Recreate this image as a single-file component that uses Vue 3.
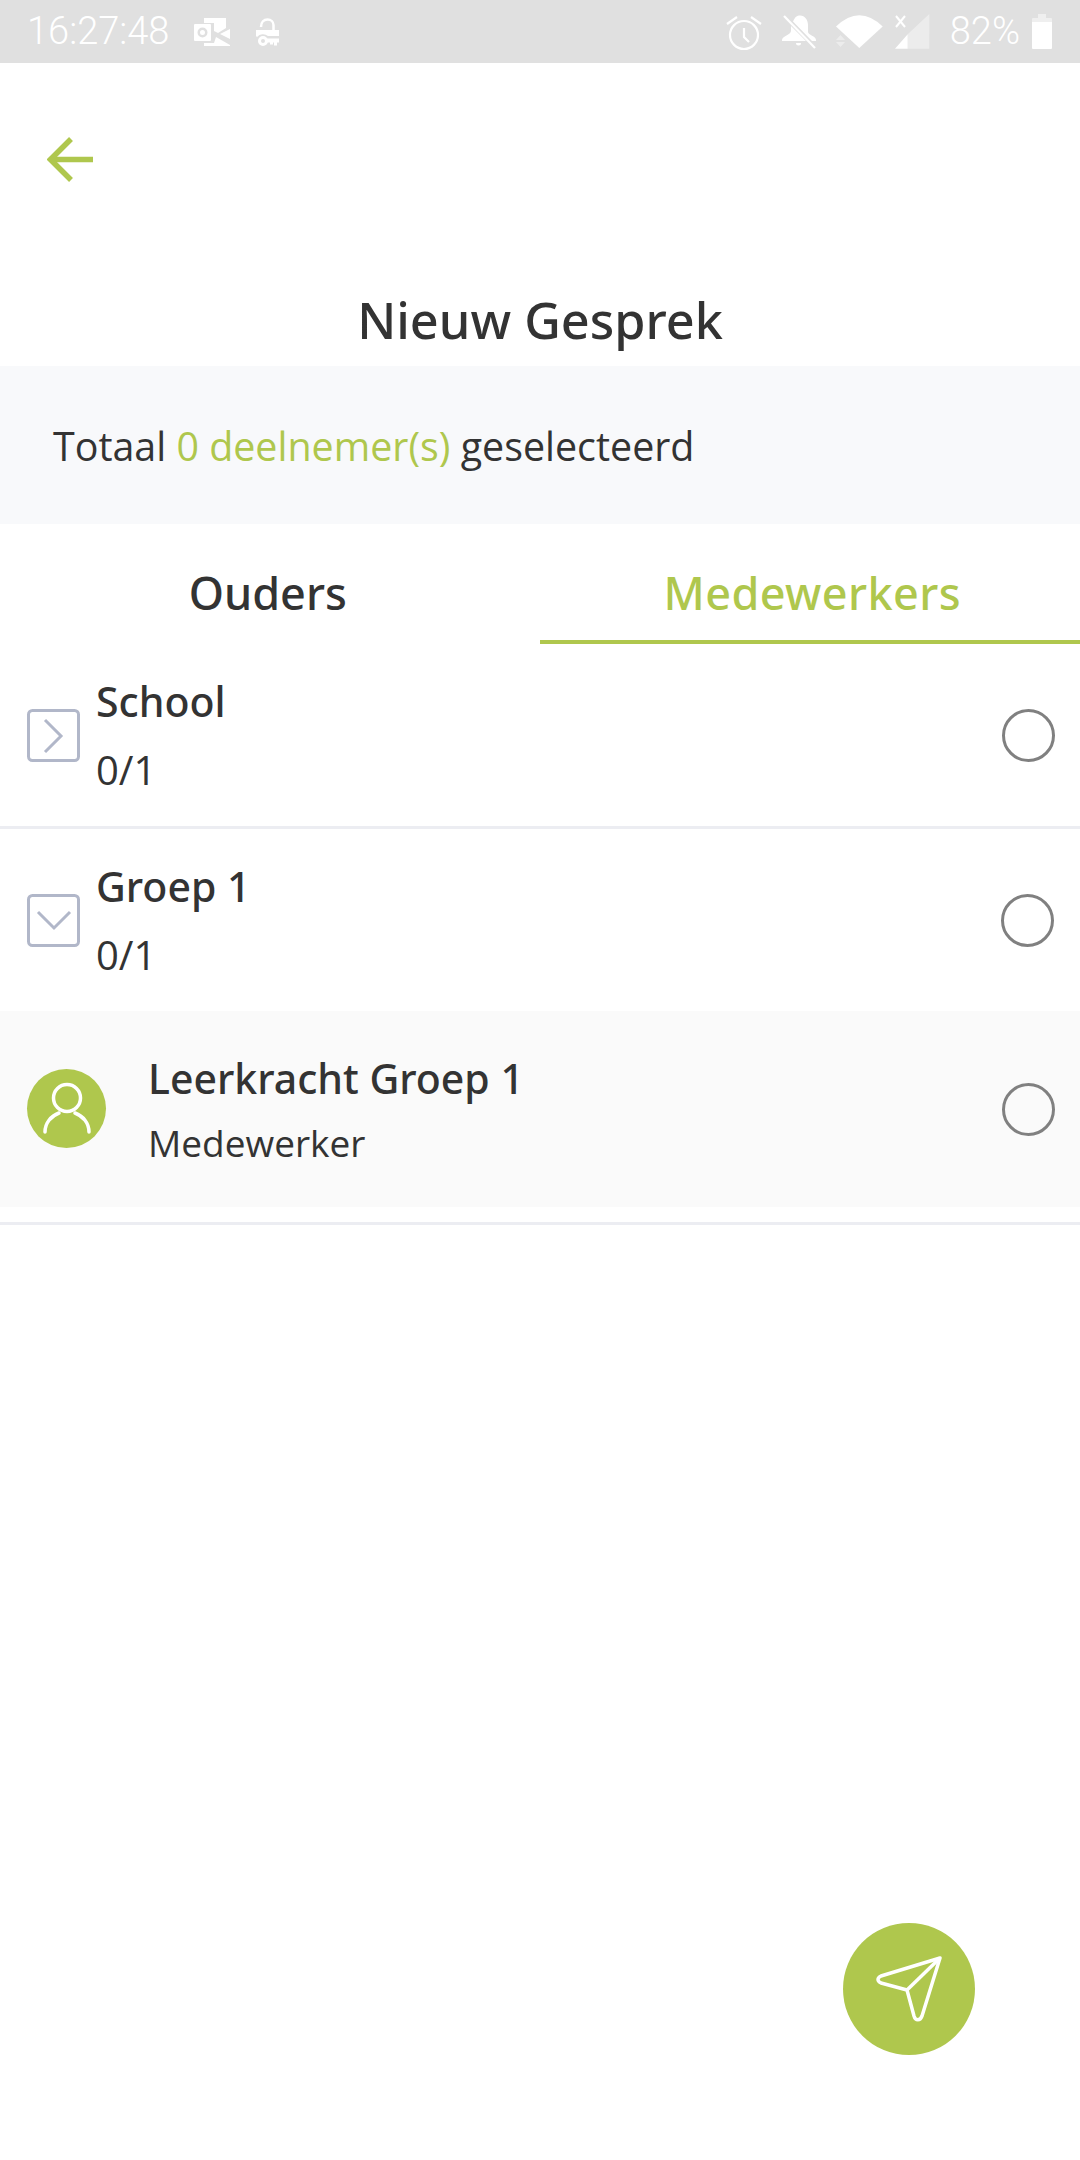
<template>
  <div class="screen">
    <div class="status-bar">
      <div class="status-left">
        <span class="clock">16:27:48</span>
        <svg class="ic-mail" viewBox="0 0 36 28" fill="#fff">
          <path d="M10 0h22v10l-8 5-4-2V5H10z"/>
          <path fill-rule="evenodd" d="M1 6h15a1 1 0 0 1 1 1v15a1 1 0 0 1-1 1H1a1 1 0 0 1-1-1V7a1 1 0 0 1 1-1zM8.500 9.500a5 5 0 1 0 0 10 5 5 0 0 0 0-10zM8.500 12a2.500 2.500 0 1 1 0 5 2.500 2.500 0 0 1 0-5z"/>
          <path d="M36 11v10l-10-5z"/>
          <path d="M10 25h10l2-6 14 8v1H10z"/>
        </svg>
        <svg class="ic-vpn" viewBox="0 0 23 28" fill="#fff">
          <path d="M5 9C5 4 8 1.500 11.500 1.500S17.500 4 17.500 7v5" fill="none" stroke="#fff" stroke-width="2.500"/>
          <path d="M0 12h23v6H12a8 8 0 0 0-11 1l-1-1z"/>
          <circle cx="7" cy="23" r="3.500" fill="none" stroke="#fff" stroke-width="3"/>
          <path d="M11 20.500h12v4h-2v3h-3v-3h-1v2h-3v-2h-3z"/>
        </svg>
      </div>
      <div class="status-right">
        <svg class="ic-alarm" viewBox="0 0 36 36" fill="none" stroke="#fff" stroke-width="2.200">
          <circle cx="18" cy="20" r="14"/>
          <path d="M18 13v9l5 5"/>
          <path d="M1 9L11 2M35 9L25 2"/>
        </svg>
        <svg class="ic-bell" viewBox="0 0 34 34" fill="#fff">
          <path d="M11 6.500C13 2 15 .5 18 .5c5 0 8 4.500 8 9.500v7c0 3 8 4 8 8v1h-4z"/>
          <path d="M9 11v5c0 4-9 5-9 9v1h24z"/>
          <path d="M14 28h5a2.500 2.500 0 0 1-5 0z"/>
          <path d="M2 1l31 32" fill="none" stroke="#fff" stroke-width="2.200"/>
        </svg>
        <svg class="ic-wifi" viewBox="0 0 47 33" fill="#fff">
          <path d="M0 11.500Q23.300-11 46.700 11.500L23.300 33z"/>
          <path d="M0 25l4.500-5L9 25zM0 27h9l-4.500 5z" opacity=".4"/>
        </svg>
        <svg class="ic-signal" viewBox="0 0 35 35" fill="#fff">
          <path d="M12.700 20.300L34.300 0v34.700H12.700z" opacity=".4"/>
          <path d="M0 34.700L12.700 20.300v14.400z"/>
          <path d="M1 2l9 11M10 2L1 13" stroke="#fff" stroke-width="2" fill="none"/>
        </svg>
        <span class="battery-text">82%</span>
        <div class="battery">
          <div class="battery-cap"></div>
          <div class="battery-fill"></div>
        </div>
      </div>
    </div>

    <div class="topbar">
      <svg class="back" viewBox="0 0 46 46" fill="none" stroke="#afc74d" stroke-width="5.500">
        <path d="M46 22.500H6"/>
        <path d="M24 2L3.500 22.500 24 43"/>
      </svg>
    </div>

    <h1 class="title">Nieuw Gesprek</h1>

    <div class="summary">
      Totaal <span class="green">0 deelnemer(s)</span> geselecteerd
    </div>

    <div class="tabs">
      <div class="tab">Ouders</div>
      <div class="tab active">Medewerkers</div>
    </div>

    <div class="group">
      <svg class="toggle" viewBox="0 0 53 53" fill="none" stroke="#b1b7c9" stroke-width="3">
        <rect x="1.500" y="1.500" width="50" height="50" rx="4"/>
        <path d="M18 11l16 16-16 16"/>
      </svg>
      <div class="group-text">
        <div class="name">School</div>
        <div class="count">0/1</div>
      </div>
      <span class="radio"></span>
    </div>

    <div class="group open">
      <svg class="toggle" viewBox="0 0 53 53" fill="none" stroke="#b1b7c9" stroke-width="3">
        <rect x="1.500" y="1.500" width="50" height="50" rx="4"/>
        <path d="M11 18l16 16 16-16"/>
      </svg>
      <div class="group-text">
        <div class="name">Groep 1</div>
        <div class="count">0/1</div>
      </div>
      <span class="radio"></span>
    </div>

    <div class="person">
      <div class="avatar">
        <svg viewBox="0 0 50 52" fill="none" stroke="#fff" stroke-width="3.500" stroke-linecap="round">
          <circle cx="25" cy="16" r="13.500"/>
          <path d="M3 50C3 41 9 34 17 31M47 50C47 41 41 34 33 31"/>
        </svg>
      </div>
      <div class="person-text">
        <div class="name">Leerkracht Groep 1</div>
        <div class="role">Medewerker</div>
      </div>
      <span class="radio"></span>
    </div>
    <div class="person-line"></div>

    <button class="fab">
      <svg viewBox="0 0 66 66" fill="none" stroke="#fff" stroke-width="3.500" stroke-linejoin="round">
        <path d="M64 2L5 20c-4 2-4 5 0 7l26 7 7 26c1.500 5 6 5 8 0z"/>
        <path d="M64 2L31 34"/>
      </svg>
    </button>
  </div>
</template>

<script setup>
</script>

<style scoped>
.screen {
  position: relative;
  width: 1080px;
  height: 2160px;
  background: #fff;
  overflow: hidden;
  font-family: "Open Sans", sans-serif;
  color: #333;
}

.status-bar {
  height: 63px;
  background: #e0e0e0;
  display: flex;
  justify-content: space-between;
  color: #fff;
  font-family: Roboto, sans-serif;
  font-weight: 300;
  font-size: 38px;
  line-height: 63px;
}

.status-left {
  display: flex;
  align-items: center;
  padding-left: 27px;
}

.status-right {
  display: flex;
  align-items: center;
  padding-right: 28px;
}

.ic-mail {
  width: 36px;
  height: 28px;
  margin-left: 25px;
}

.ic-vpn {
  width: 23px;
  height: 28px;
  margin-left: 26px;
}

.ic-alarm {
  width: 36px;
  height: 36px;
  margin-top: 3px;
}

.ic-bell {
  width: 34px;
  height: 34px;
  margin-left: 20px;
}

.ic-wifi {
  width: 47px;
  height: 33px;
  margin-left: 20px;
}

.ic-signal {
  width: 35px;
  height: 35px;
  margin-left: 12px;
}

.battery-text {
  margin-left: 20px;
}

.battery {
  width: 20px;
  height: 35px;
  margin-left: 12px;
  display: flex;
  flex-direction: column;
  align-items: center;
}

.battery-cap {
  width: 8px;
  height: 4px;
  background: #efefef;
}

.battery-fill {
  width: 20px;
  flex: 1;
  background: linear-gradient(#efefef 4px, #fff 4px);
  border-radius: 1px;
}

.topbar {
  height: 196px;
  padding: 74px 0 0 47px;
  box-sizing: border-box;
}

.back {
  display: block;
  width: 46px;
  height: 46px;
}

.title {
  margin: 0;
  height: 107px;
  text-align: center;
  font-family: "Noto Sans", sans-serif;
  font-size: 50.4px;
  font-weight: 500;
  line-height: 122px;
  color: #333;
}

.summary {
  height: 158px;
  background: #f8f9fb;
  padding-left: 53px;
  font-size: 39.4px;
  line-height: 160px;
  color: #333;
}

.green {
  color: #afc74d;
}

.tabs {
  display: flex;
  height: 120px;
}

.tab {
  flex: 1;
  text-align: center;
  font-family: "Noto Sans", sans-serif;
  font-size: 45px;
  font-weight: 500;
  line-height: 138px;
  box-sizing: border-box;
  padding-right: 4px;
}

.tab.active {
  color: #afc74d;
  border-bottom: 4px solid #afc74d;
  padding: 0 0 0 5px;
  letter-spacing: 0.4px;
}

.group {
  height: 185px;
  box-sizing: border-box;
  border-bottom: 3px solid #ecedf2;
  display: flex;
  align-items: center;
  padding: 0 25px 0 27px;
}

.group.open {
  height: 182px;
  border-bottom: none;
  padding-right: 26px;
}

.toggle {
  width: 53px;
  height: 53px;
  flex-shrink: 0;
}

.group-text {
  flex: 1;
  margin-left: 16px;
}

.name {
  font-family: "Noto Sans", sans-serif;
  font-size: 41px;
  font-weight: 500;
  line-height: 54px;
}

.count {
  font-size: 40px;
  line-height: 52px;
  margin-top: 16px;
}

.radio {
  width: 53px;
  height: 53px;
  box-sizing: border-box;
  border: 3px solid #808080;
  border-radius: 50%;
  flex-shrink: 0;
}

.person {
  height: 196px;
  background: #fafafa;
  display: flex;
  align-items: center;
  padding: 0 25px 0 27px;
}

.avatar {
  width: 79px;
  height: 79px;
  margin-bottom: 2px;
  border-radius: 50%;
  background: #afc74d;
  display: flex;
  align-items: center;
  justify-content: center;
  flex-shrink: 0;
}

.avatar svg {
  width: 50px;
  height: 52px;
}

.person-text {
  flex: 1;
  margin-left: 42px;
}

.role {
  font-size: 37px;
  line-height: 48px;
  margin-top: 14px;
}

.person-line {
  height: 3px;
  margin-top: 15px;
  background: #ecedf2;
}

.fab {
  position: absolute;
  left: 843px;
  top: 1923px;
  width: 132px;
  height: 132px;
  padding: 0;
  border: none;
  border-radius: 50%;
  background: #afc74d;
  display: flex;
  align-items: center;
  justify-content: center;
}

.fab svg {
  width: 66px;
  height: 66px;
}
</style>
